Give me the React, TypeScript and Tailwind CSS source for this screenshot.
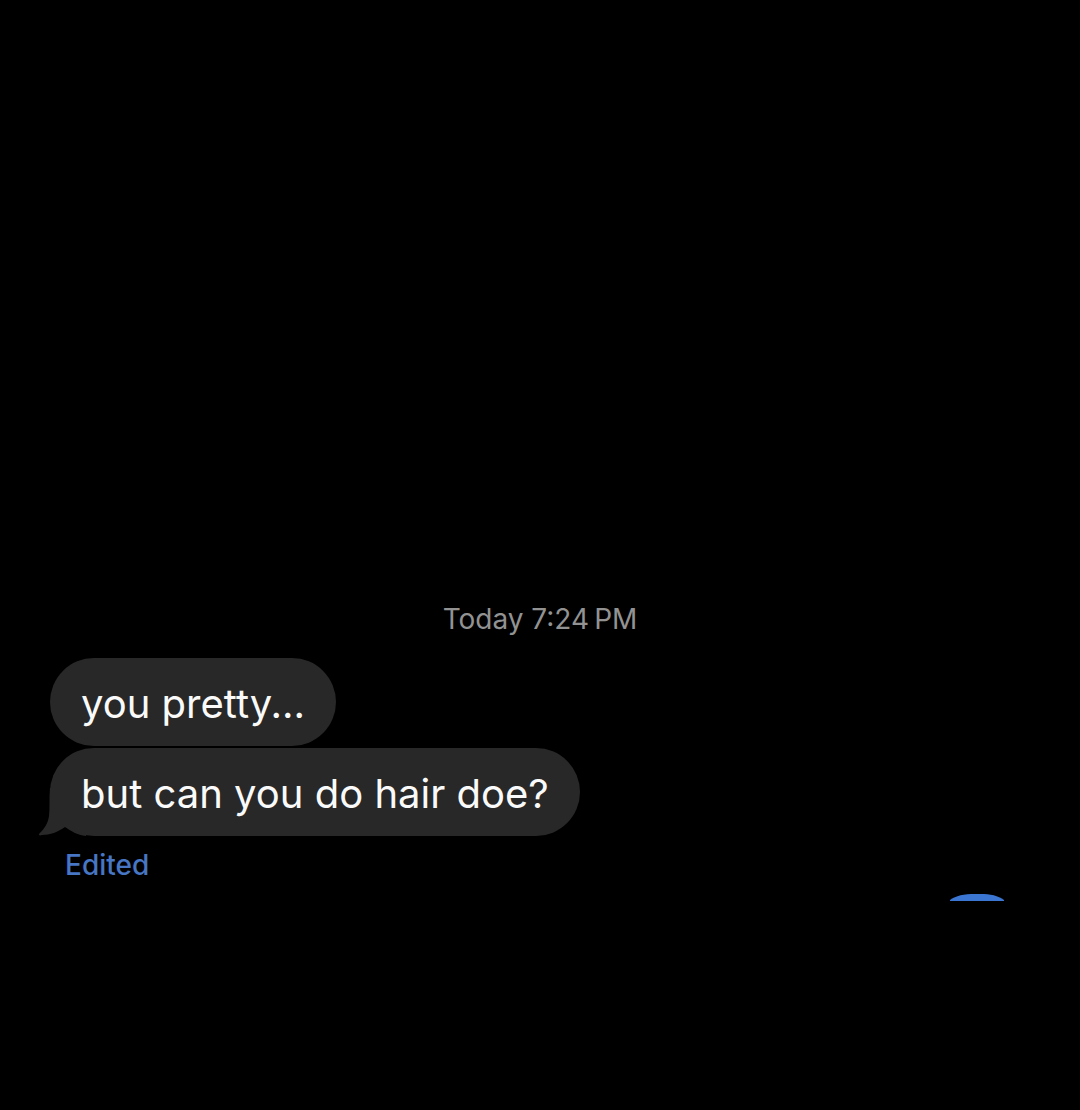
import React from "react";

// Messages received in the conversation
const messages = [
  {
    id: 1,
    text: "you pretty...",
    hasTail: false,
  },
  {
    id: 2,
    text: "but can you do hair doe?",
    hasTail: true,
  },
];

const BubbleTail = () => {
  return (
    <svg
      className="absolute -left-3 bottom-0 h-12 w-12 text-[#282828]"
      viewBox="0 0 48 48"
      fill="currentColor"
      aria-hidden="true"
    >
      <path d="M12 0C11 10 12 20 11 28C10 35 7 40 1 46C1 47 1 48 4 47C12 47 20 44 27 39C33 43 39 47 48 48V0Z" />
    </svg>
  );
};

const App = () => {
  return (
    <main className="flex min-h-screen flex-col bg-black pt-[603px] font-['Inter','Liberation_Sans',sans-serif]">
      {/* Time stamp */}
      <time className="text-center text-[28px] leading-8 text-[#929292]">
        Today 7:24{"\u2009"}PM
      </time>

      {/* Received messages */}
      <ul className="mt-[23px] flex flex-col items-start gap-[2px] pl-[50px] pr-12">
        {messages.map((message) => (
          <li
            key={message.id}
            className="relative rounded-[44px] bg-[#282828] px-[31px] pb-4 pt-5 text-[40px] leading-[52px] text-[#fafafa]"
          >
            {message.hasTail && <BubbleTail />}
            <span className="relative">{message.text}</span>
          </li>
        ))}
      </ul>

      {/* Edit history link */}
      <a
        href="#edited"
        className="ml-[65px] mt-[11px] self-start text-[28px] font-medium leading-9 text-[#4676c4]"
      >
        Edited
      </a>

      {/* Top edge of the next sent bubble */}
      <div className="mr-[76px] mt-[10px] h-2 w-[54px] self-end overflow-hidden">
        <svg
          className="h-2 w-full"
          viewBox="0 0 54 8"
          fill="#3b76d2"
          aria-hidden="true"
        >
          <path d="M0 7C2 5 11 1 21 1H34C43 1 52 5 54 7V8H0Z" />
        </svg>
      </div>
    </main>
  );
};

export default App;
